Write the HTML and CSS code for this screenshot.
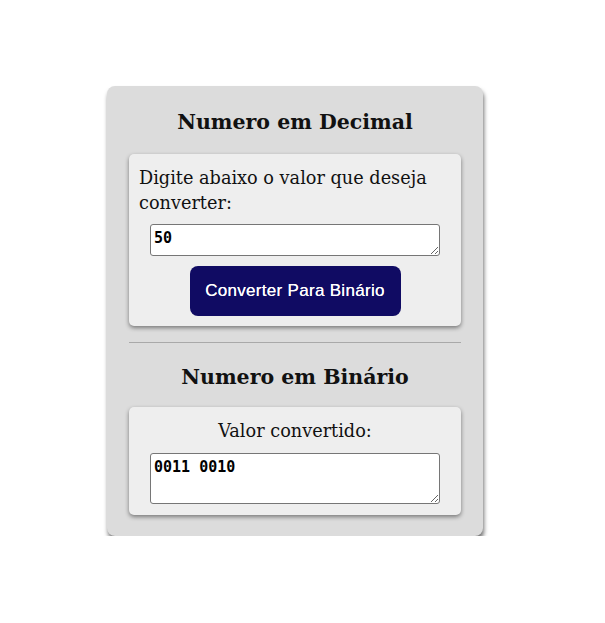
FILE: index.html
```html
<!DOCTYPE html>
<html lang="pt">
<head>
<meta charset="utf-8">
<title>Conversor</title>
<link rel="stylesheet" href="styles.css">
</head>
<body>
<main class="page">
  <section class="card">
    <h2 class="title">Numero em Decimal</h2>
    <div class="box">
      <p class="label label-left">Digite abaixo o valor que deseja converter:</p>
      <textarea class="field field-small">50</textarea>
      <button class="btn">Converter Para Binário</button>
    </div>
    <hr class="divider">
    <h2 class="title title-second">Numero em Binário</h2>
    <div class="box">
      <p class="label label-center">Valor convertido:</p>
      <textarea class="field field-large">0011 0010</textarea>
    </div>
  </section>
</main>
</body>
</html>
```
FILE: styles.css
```css
html, body {
  margin: 0;
  padding: 0;
  background: #ffffff;
}
.page {
  display: flex;
  justify-content: flex-start;
  padding: 86px 0 0 107px;
  font-family: "DejaVu Serif", serif;
}
.card {
  width: 376px;
  box-sizing: border-box;
  padding: 20px 22px 21px 22px;
  background: #dcdcdc;
  border-radius: 8px;
  box-shadow: 1px 4px 4px rgba(0, 0, 0, 0.55);
  display: flex;
  flex-direction: column;
}
.title {
  margin: 0 0 16px 0;
  font-size: 20.5px;
  line-height: 32px;
  font-weight: bold;
  text-align: center;
  color: #111;
}
.title-second {
  margin-top: 18px;
  margin-bottom: 14px;
}
.box {
  background: #eeeeee;
  border-radius: 5px;
  box-shadow: 0 2px 4px rgba(0, 0, 0, 0.45);
  padding: 12px 10px 10px 10px;
  display: flex;
  flex-direction: column;
  align-items: center;
}
.label {
  margin: 0 0 8px 0;
  font-size: 17.7px;
  line-height: 25px;
  color: #111;
  align-self: stretch;
}
.label-left { text-align: left; }
.label-center { text-align: center; margin-bottom: 9px; }
.field {
  width: 290px;
  box-sizing: border-box;
  border: 1px solid #767676;
  border-radius: 3px;
  background: #fff;
  font-family: "DejaVu Sans Mono", monospace;
  font-weight: bold;
  font-size: 15px;
  line-height: 17px;
  padding: 5px 3px;
  margin: 0;
  resize: vertical;
  color: #000;
  overflow: hidden;
}
.field-small { height: 32px; }
.field-large { height: 51px; margin-bottom: 1px; }
.btn {
  margin-top: 10px;
  width: 211px;
  height: 50px;
  border: none;
  border-radius: 8px;
  background: #100b63;
  color: #fff;
  font-family: "Liberation Sans", Arial, sans-serif;
  font-size: 17px;
  font-weight: normal;
  letter-spacing: 0.3px;
  text-shadow: 0 0 0.6px #fff;
}
.divider {
  width: 100%;
  margin: 16px 0 0 0;
  border: none;
  border-top: 1px solid #a9a9a9;
}
```
